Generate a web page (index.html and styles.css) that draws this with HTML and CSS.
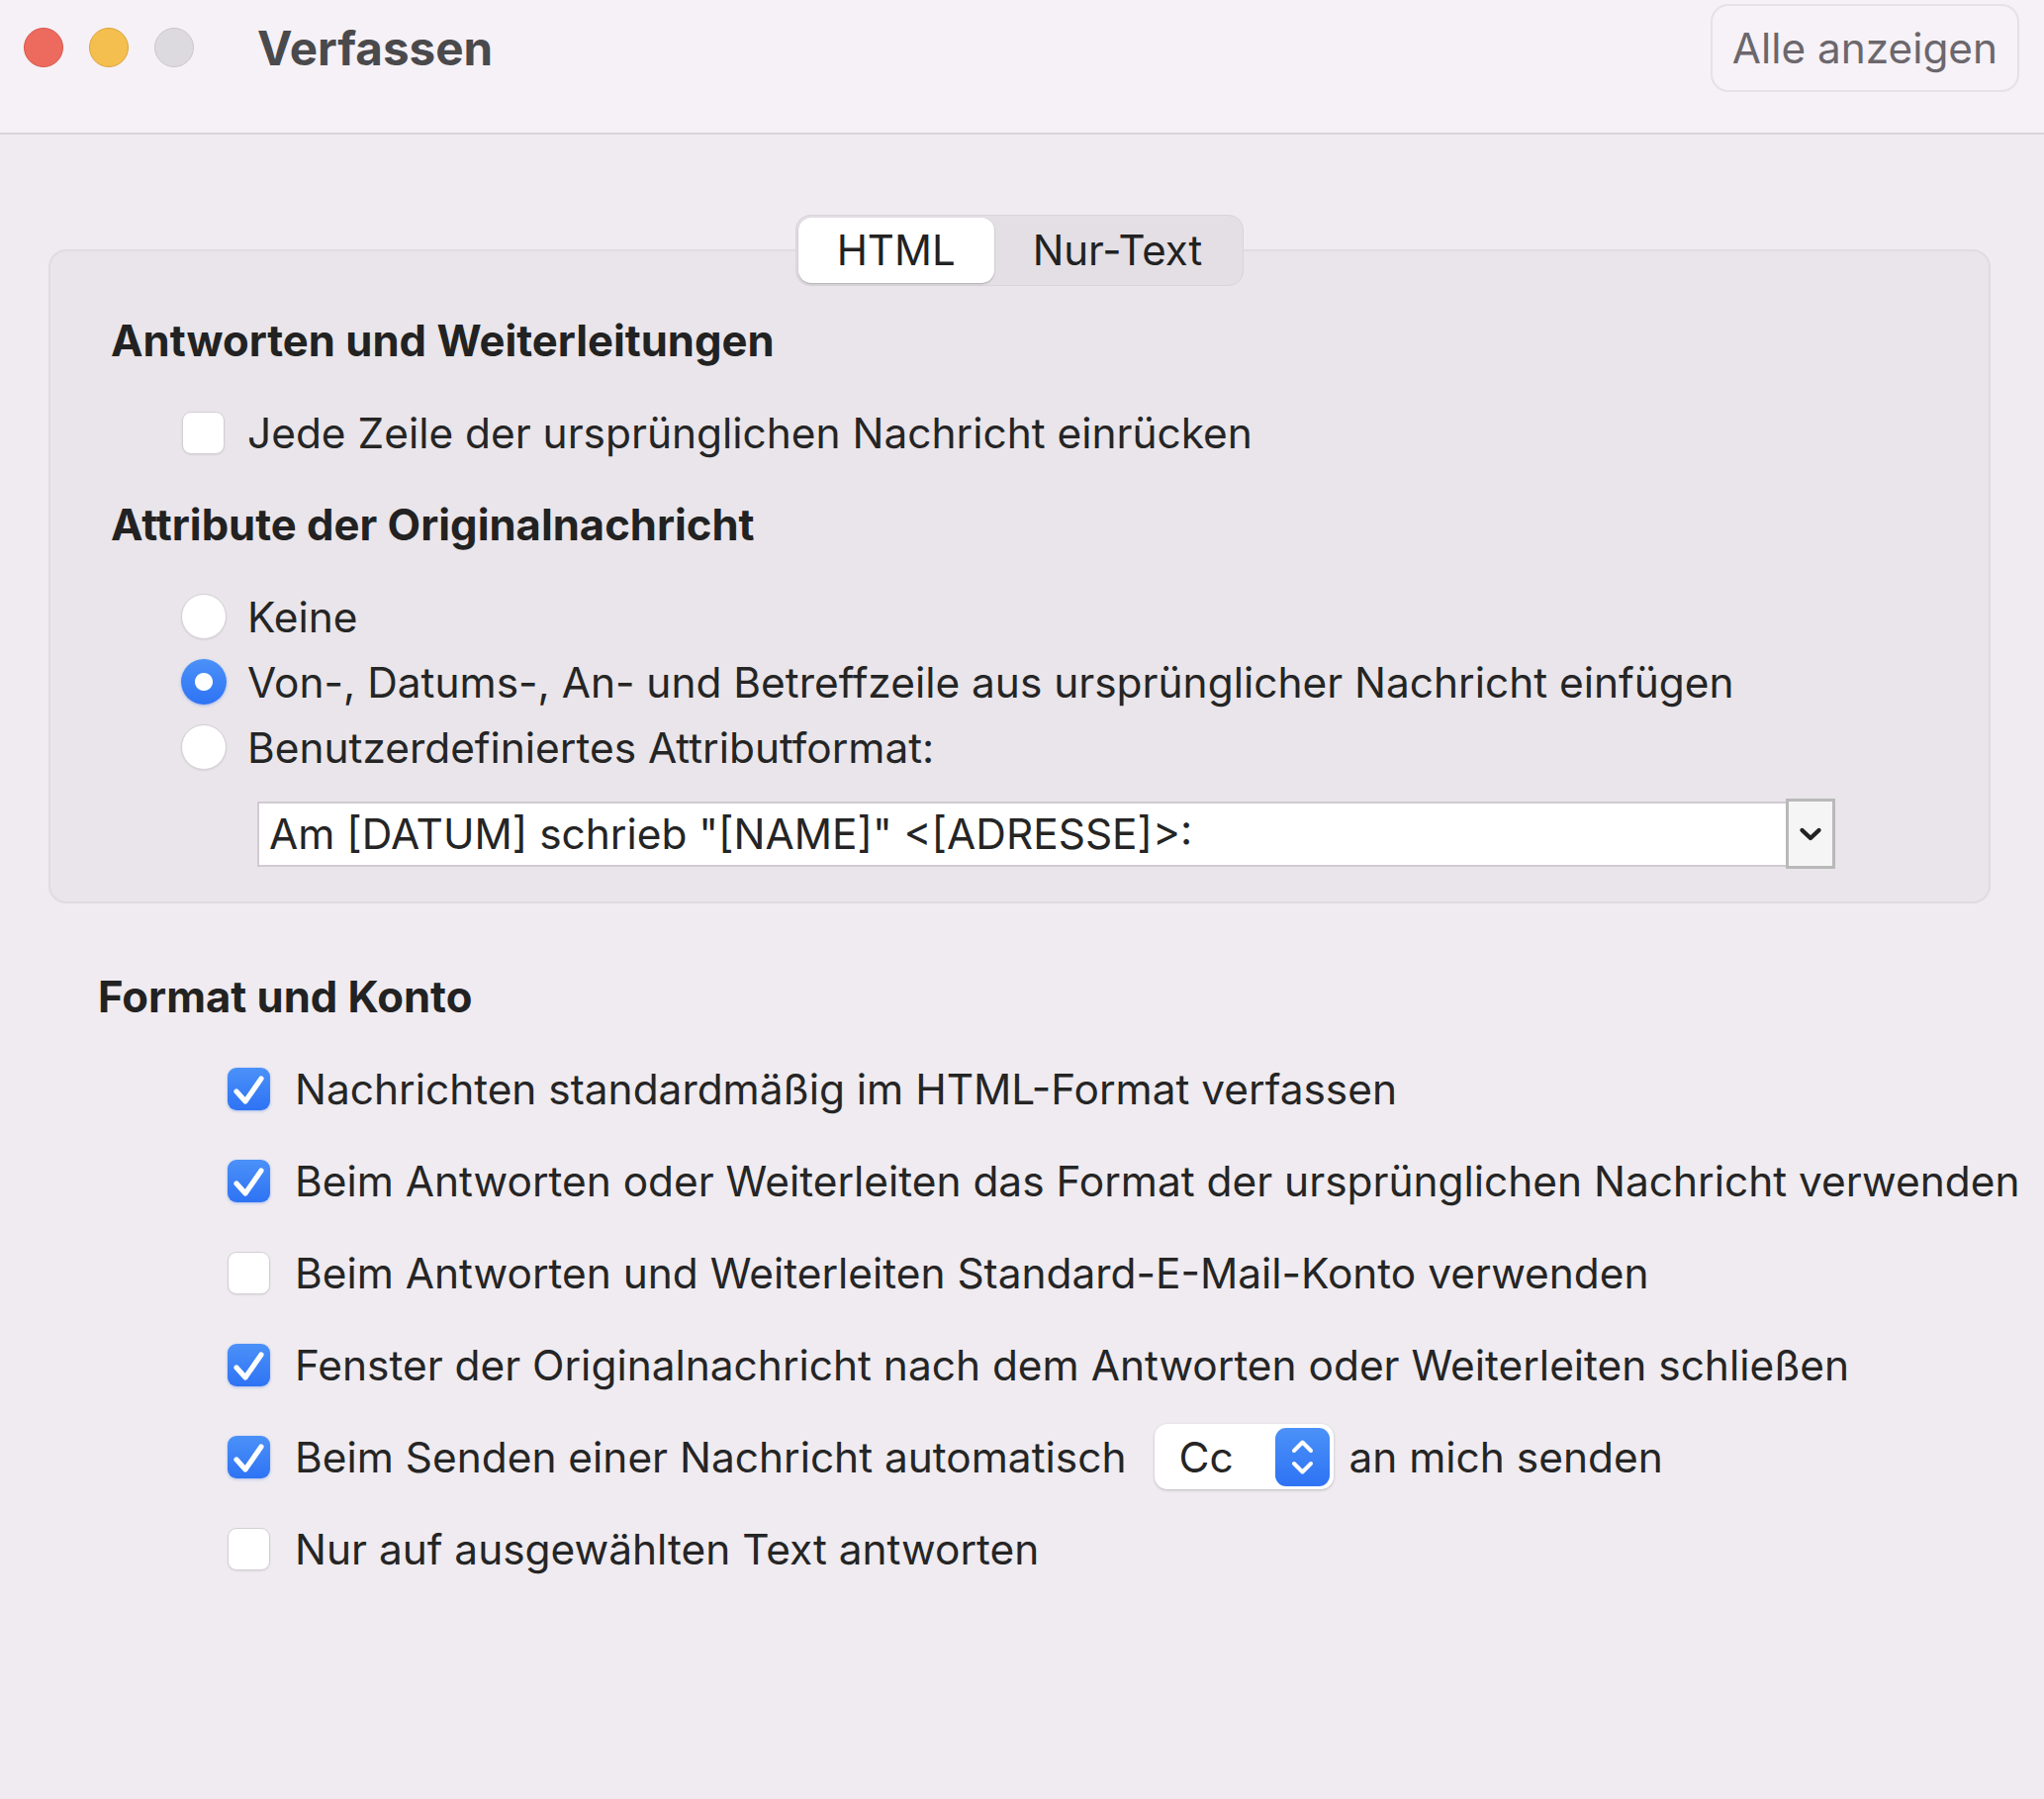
FILE: index.html
```html
<!DOCTYPE html>
<html lang="de">
<head>
    <meta charset="UTF-8">
    <title>Verfassen</title>
    <link rel="stylesheet" href="styles.css">
</head>
<body>
    <div class="window">
        <header class="titlebar">
            <div class="lights">
                <span class="light red"></span>
                <span class="light yellow"></span>
                <span class="light off"></span>
            </div>
            <h1 class="title">Verfassen</h1>
            <button class="show-all">Alle anzeigen</button>
        </header>

        <main class="content">
            <section class="tabbox">
                <div class="segmented">
                    <span class="seg active">HTML</span>
                    <span class="seg">Nur-Text</span>
                </div>
                <div class="panel">
                    <h2 class="heading">Antworten und Weiterleitungen</h2>
                    <label class="option first-check"><span class="check"></span>Jede Zeile der ursprünglichen Nachricht einrücken</label>

                    <h2 class="heading second">Attribute der Originalnachricht</h2>
                    <label class="option radio-row"><span class="radio"></span>Keine</label>
                    <label class="option radio-row tight"><span class="radio on"></span>Von-, Datums-, An- und Betreffzeile aus ursprünglicher Nachricht einfügen</label>
                    <label class="option radio-row tight"><span class="radio"></span>Benutzerdefiniertes Attributformat:</label>

                    <div class="combo">
                        <span class="combo-field">Am [DATUM] schrieb "[NAME]" &lt;[ADRESSE]&gt;:</span>
                        <span class="combo-btn">
                            <svg width="24" height="16" viewBox="0 0 24 16"><path d="M3.5 4 L12 12 L20.5 4" fill="none" stroke="#222" stroke-width="4.4" stroke-linecap="round" stroke-linejoin="round"/></svg>
                        </span>
                    </div>
                </div>
            </section>

            <section class="format">
                <h2 class="heading">Format und Konto</h2>
                <div class="list">
                    <label class="option"><span class="check on"><svg width="43" height="43" viewBox="0 0 43 43"><path d="M9 24 L18 34 L34 11" fill="none" stroke="#fff" stroke-width="5.2" stroke-linecap="round" stroke-linejoin="round"/></svg></span>Nachrichten standardmäßig im HTML-Format verfassen</label>
                    <label class="option"><span class="check on"><svg width="43" height="43" viewBox="0 0 43 43"><path d="M9 24 L18 34 L34 11" fill="none" stroke="#fff" stroke-width="5.2" stroke-linecap="round" stroke-linejoin="round"/></svg></span>Beim Antworten oder Weiterleiten das Format der ursprünglichen Nachricht verwenden</label>
                    <label class="option"><span class="check"></span>Beim Antworten und Weiterleiten Standard-E-Mail-Konto verwenden</label>
                    <label class="option"><span class="check on"><svg width="43" height="43" viewBox="0 0 43 43"><path d="M9 24 L18 34 L34 11" fill="none" stroke="#fff" stroke-width="5.2" stroke-linecap="round" stroke-linejoin="round"/></svg></span>Fenster der Originalnachricht nach dem Antworten oder Weiterleiten schließen</label>
                    <label class="option"><span class="check on"><svg width="43" height="43" viewBox="0 0 43 43"><path d="M9 24 L18 34 L34 11" fill="none" stroke="#fff" stroke-width="5.2" stroke-linecap="round" stroke-linejoin="round"/></svg></span>Beim Senden einer Nachricht automatisch
                        <span class="popup">
                            <span class="popup-value">Cc</span>
                            <span class="stepper">
                                <svg width="55" height="59" viewBox="0 0 55 59"><path d="M19 23 L27.5 14.5 L36 23" fill="none" stroke="#fff" stroke-width="4" stroke-linecap="round" stroke-linejoin="round"/><path d="M19 36 L27.5 44.5 L36 36" fill="none" stroke="#fff" stroke-width="4" stroke-linecap="round" stroke-linejoin="round"/></svg>
                            </span>
                        </span>
                        an mich senden</label>
                    <label class="option"><span class="check"></span>Nur auf ausgewählten Text antworten</label>
                </div>
            </section>
        </main>
    </div>
</body>
</html>
```

FILE: styles.css
```css
body{
    margin:0;
    background-color:#efebf0;
    font-family:Inter, "Liberation Sans", sans-serif;
    color:#252525;
    }
.window{
    width:2066px;
    min-height:1818px;
    }

/* title bar */
.titlebar{
    display:flex;
    align-items:center;
    height:96px;
    padding:0 25px 38px 24px;
    background-color:#f5f1f6;
    border-bottom:2px solid #d8d4d9;
    }
.lights{
    display:flex;
    gap:26px;
    }
.light{
    width:38px;
    height:38px;
    border-radius:50%;
    border:1px solid;
    }
.red{
    background-color:#ed6a5e;
    border-color:#d7584d;
    }
.yellow{
    background-color:#f5bf4f;
    border-color:#dba53c;
    }
.off{
    background-color:#dddadf;
    border-color:#cbc7cd;
    }
.title{
    margin:0 0 0 64px;
    font-size:47.6px;
    font-weight:700;
    color:#4a494c;
    }
.show-all{
    margin-left:auto;
    height:89px;
    padding:0 20px;
    border:2px solid #e5e1e6;
    border-radius:18px;
    background-color:#f6f2f7;
    font-family:inherit;
    font-size:42.3px;
    color:#6b676d;
    }

/* main area */
.content{
    padding:81px 54px 0 49px;
    }
.tabbox{
    display:flex;
    flex-direction:column;
    align-items:center;
    }
.segmented{
    display:flex;
    position:relative;
    z-index:1;
    margin-bottom:-37px;
    padding:2px;
    background-color:#e3dfe4;
    border:1px solid #d8d4d9;
    border-radius:15px;
    }
.seg{
    height:66px;
    line-height:66px;
    padding:0 39px;
    font-size:42px;
    color:#222;
    border-radius:13px;
    }
.seg.active{
    background-color:#fff;
    box-shadow:0 1px 2px rgba(0,0,0,0.25);
    }
.panel{
    align-self:stretch;
    display:flex;
    flex-direction:column;
    align-items:flex-start;
    background-color:#e9e5ea;
    border:2px solid #dfdbe0;
    border-radius:18px;
    padding:64px 60px 33px 61px;
    }
.heading{
    margin:0;
    font-size:43.6px;
    line-height:54px;
    font-weight:700;
    color:#222;
    }
.option{
    display:flex;
    align-items:center;
    gap:25px;
    height:54px;
    font-size:42.4px;
    white-space:nowrap;
    }
.panel .option{
    margin-left:72px;
    gap:23px;
    }
.first-check{
    margin-top:38px;
    }
.heading.second{
    margin-top:40px;
    }
.panel .radio-row{
    margin-top:38px;
    margin-left:71px;
    gap:21px;
    }
.panel .radio-row.tight{
    margin-top:12px;
    }

/* checkbox and radio */
.check{
    flex:none;
    width:43px;
    height:43px;
    box-sizing:border-box;
    border:1px solid #d3cfd4;
    border-radius:9px;
    background-color:#fff;
    box-shadow:0 1px 2px rgba(0,0,0,0.08);
    }
.check.on{
    border:none;
    background:linear-gradient(#4b91f8, #2e73f4);
    box-shadow:0 1px 3px rgba(40,100,230,0.35);
    }
.check svg{
    display:block;
    }
.radio{
    flex:none;
    width:46px;
    height:46px;
    box-sizing:border-box;
    border:1px solid #d3cfd4;
    border-radius:50%;
    background-color:#fff;
    box-shadow:0 1px 2px rgba(0,0,0,0.08);
    }
.radio.on{
    border:none;
    background:radial-gradient(circle, #fff 0 8.5px, transparent 9.5px), linear-gradient(#4b91f8, #2e73f4);
    box-shadow:0 1px 3px rgba(40,100,230,0.35);
    }

/* combo box */
.combo{
    display:flex;
    align-items:center;
    margin:25px 0 0 148px;
    }
.combo-field{
    width:1545px;
    height:66px;
    line-height:62px;
    box-sizing:border-box;
    padding-left:10px;
    background-color:#fff;
    border:2px solid #cfcbd0;
    border-right:none;
    font-size:42.4px;
    }
.combo-btn{
    display:flex;
    align-items:center;
    justify-content:center;
    width:50px;
    height:71px;
    box-sizing:border-box;
    background-color:#f5f5f5;
    border:3px solid #b9b9b9;
    }

/* format section */
.format{
    padding:68px 0 0 50px;
    }
.list{
    display:flex;
    flex-direction:column;
    gap:39px;
    margin:38px 0 0 131px;
    }
.popup{
    display:flex;
    align-items:center;
    justify-content:space-between;
    width:181px;
    height:66px;
    box-sizing:border-box;
    margin:0 -10px 0 4px;
    padding:0 4px 0 24px;
    background-color:#fff;
    border-radius:13px;
    box-shadow:0 1px 3px rgba(0,0,0,0.22);
    }
.stepper{
    width:55px;
    height:59px;
    border-radius:11px;
    background:linear-gradient(#4b91f8, #2e73f4);
    }
.stepper svg{
    display:block;
    }
```
